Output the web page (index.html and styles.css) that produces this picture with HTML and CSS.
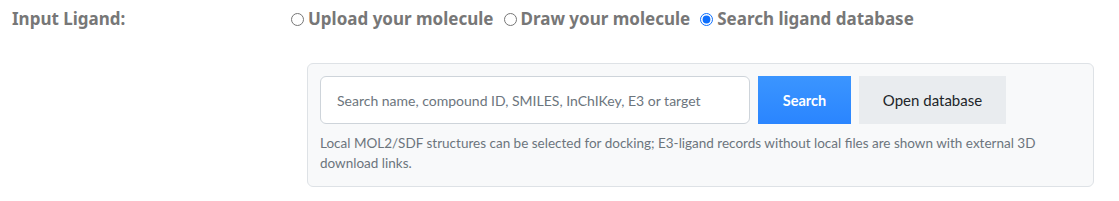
FILE: index.html
```html
<!DOCTYPE html>
<html lang="en">

<head>
    <meta charset="UTF-8">
    <meta name="viewport" content="width=device-width, initial-scale=1.0">
    <title>Input Ligand</title>
    <link rel="stylesheet" href="styles.css">
</head>

<body>
    <div class="form-row">
        <div class="row-label">Input Ligand:</div>
        <div class="row-body">
            <div class="radio-group">
                <label class="radio-option">
                    <input type="radio" name="ligand_source" value="upload">
                    <span>Upload your molecule</span>
                </label>
                <label class="radio-option">
                    <input type="radio" name="ligand_source" value="draw">
                    <span>Draw your molecule</span>
                </label>
                <label class="radio-option">
                    <input type="radio" name="ligand_source" value="database" checked>
                    <span>Search ligand database</span>
                </label>
            </div>
            <div class="db-panel">
                <div class="search-bar">
                    <input type="text" class="search-input" placeholder="Search name, compound ID, SMILES, InChIKey, E3 or target">
                    <button type="button" class="btn-search">Search</button>
                    <button type="button" class="btn-open">Open database</button>
                </div>
                <p class="help-text">Local MOL2/SDF structures can be selected for docking; E3-ligand records without local files are shown with external 3D download links.</p>
            </div>
        </div>
    </div>
</body>

</html>
```

FILE: styles.css
```css
* {
    margin: 0;
    padding: 0;
    box-sizing: border-box;
}

body {
    font-family: 'Lato', 'Noto Sans', sans-serif;
    background-color: #fff;
    color: #212529;
}

.form-row {
    display: flex;
    padding: 8px 12px;
}

.row-label {
    width: 278px;
    font-family: 'Noto Sans', sans-serif;
    font-size: 17px;
    font-weight: bold;
    color: #777;
    line-height: 22px;
}

.row-body {
    flex: 1;
}

.radio-group {
    display: flex;
    gap: 9px;
    line-height: 22px;
}

.radio-option {
    display: flex;
    align-items: center;
    font-family: 'Noto Sans', sans-serif;
    font-size: 17px;
    font-weight: bold;
    color: #777;
    cursor: pointer;
}

.radio-option input {
    width: 13px;
    height: 13px;
    margin: 1px 4px 0 1px;
    accent-color: #0d6efd;
}

.db-panel {
    margin: 33px 13px 0 17px;
    background-color: #f8f9fa;
    border: 1px solid #dee2e6;
    border-radius: 6px;
    padding: 12px 12px 13px;
}

.search-bar {
    display: flex;
    gap: 8px;
}

.search-input {
    width: 430px;
    height: 48px;
    padding: 0 16px;
    border: 1px solid #ced4da;
    border-radius: 6px;
    font-family: inherit;
    font-size: 14px;
    color: #495057;
}

.search-input::placeholder {
    color: #6c757d;
}

.btn-search,
.btn-open {
    height: 48px;
    border: none;
    font-family: inherit;
    font-size: 15px;
    cursor: pointer;
}

.btn-search {
    width: 93px;
    background: linear-gradient(#3b95ff, #2a85ff);
    color: #fff;
    font-weight: bold;
    font-size: 14.5px;
}

.btn-open {
    width: 147px;
    background-color: #e9ecef;
    color: #212529;
}

.help-text {
    margin-top: 9px;
    font-size: 13.5px;
    line-height: 20px;
    color: #6c757d;
}
```
